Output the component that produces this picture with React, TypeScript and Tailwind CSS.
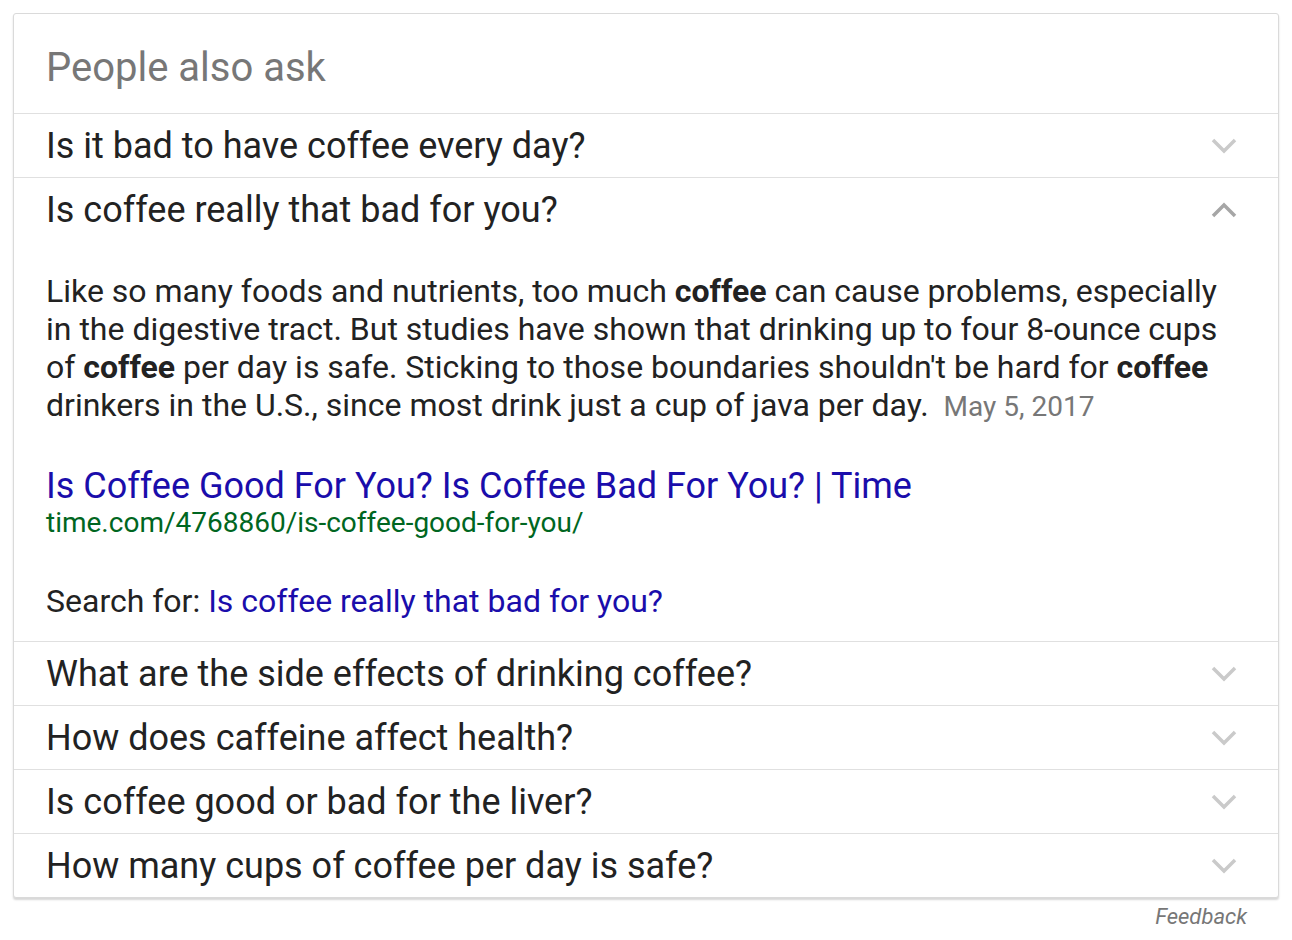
import React from "react";

const questions = [
  "Is it bad to have coffee every day?",
  "Is coffee really that bad for you?",
  "What are the side effects of drinking coffee?",
  "How does caffeine affect health?",
  "Is coffee good or bad for the liver?",
  "How many cups of coffee per day is safe?",
];

const Chevron = ({ up }: { up?: boolean }) => (
  <svg width="26" height="18" viewBox="0 0 26 18" className="shrink-0">
    <polyline
      points={up ? "2,15 13,4 24,15" : "2,3 13,14 24,3"}
      fill="none"
      stroke={up ? "#a6a6a6" : "#cacaca"}
      strokeWidth="3.5"
    />
  </svg>
);

const Question = ({ text, open }: { text: string; open?: boolean }) => (
  <div className="h-[63px] flex items-center justify-between pl-[32px] pr-[41px]">
    <span className="text-[36px] leading-[40px] text-[#222]">{text}</span>
    <Chevron up={open} />
  </div>
);

const Answer = () => (
  <div className="pl-[32px] pr-[40px] pb-[21px]">
    <p className="mt-[31px] text-[32px] leading-[38px] text-[#222]">
      Like so many foods and nutrients, too much <b>coffee</b> can cause
      problems, especially in the digestive tract. But studies have shown that
      drinking up to four 8-ounce cups of <b>coffee</b> per day is safe.
      Sticking to those boundaries shouldn't be hard for <b>coffee</b> drinkers
      in the U.S., since most drink just a cup of java per day.
      <span className="ml-[15px] text-[28px] text-[#777]">May 5, 2017</span>
    </p>
    <div className="mt-[42px] text-[36px] leading-[36px] text-[#1a0dab]">
      Is Coffee Good For You? Is Coffee Bad For You? | Time
    </div>
    <div className="mt-[4px] text-[28px] leading-[30px] text-[#006621]">
      time.com/4768860/is-coffee-good-for-you/
    </div>
    <div className="mt-[44px] text-[32px] leading-[38px] text-[#222]">
      Search for:{" "}
      <span className="text-[#1a0dab]">Is coffee really that bad for you?</span>
    </div>
  </div>
);

export default function App() {
  return (
    <div
      className="bg-white min-h-[940px] pt-[13px] pl-[13px]"
      style={{ fontFamily: "Roboto, 'Liberation Sans', sans-serif" }}
    >
      <div className="w-[1266px] border border-[#dadada] rounded-[3px] shadow-[0_2px_2px_rgba(0,0,0,0.16)] bg-white">
        <div className="h-[99px] pl-[32px] pt-[29px] text-[40px] leading-[50px] text-[#777]">
          People also ask
        </div>
        {questions.map((q, i) => (
          <div key={i} className="border-t border-[#e0e0e0]">
            <Question text={q} open={i === 1} />
            {i === 1 && <Answer />}
          </div>
        ))}
      </div>
      <div className="w-[1234px] text-right pt-[5px] text-[22px] leading-[28px] italic text-[#777]">
        Feedback
      </div>
    </div>
  );
}
